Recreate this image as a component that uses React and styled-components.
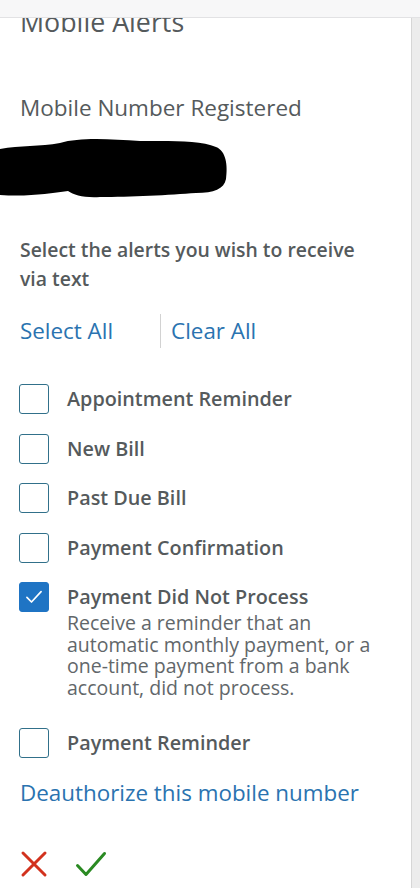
import React, { useState } from 'react';
import styled, { createGlobalStyle } from 'styled-components';

const GlobalStyle = createGlobalStyle`
  html, body {
    margin: 0;
    padding: 0;
    background: #fff;
    font-family: "Open Sans", "Noto Sans", sans-serif;
  }
`;

const ALERTS = [
  { id: 'appt', label: 'Appointment Reminder' },
  { id: 'bill', label: 'New Bill' },
  { id: 'pastdue', label: 'Past Due Bill' },
  { id: 'confirm', label: 'Payment Confirmation' },
  {
    id: 'failed',
    label: 'Payment Did Not Process',
    note: 'Receive a reminder that an automatic monthly payment, or a one-time payment from a bank account, did not process.',
  },
  { id: 'reminder', label: 'Payment Reminder' },
];

const Page = styled.div`
  width: 420px;
  height: 888px;
  display: flex;
  flex-direction: column;
  overflow: hidden;
`;

const TopBar = styled.div`
  height: 17px;
  flex: none;
  background: #f7f7f8;
  border-bottom: 1px solid #e2e2e4;
`;

const Body = styled.div`
  flex: 1;
  display: flex;
  min-height: 0;
`;

const Panel = styled.div`
  flex: 1;
  overflow: hidden;
  padding: 0 20px;
  color: #555a5c;
`;

const Rail = styled.div`
  width: 8px;
  flex: none;
  background: #ececec;
  border-left: 1px solid #d6d6d6;
`;

const Title = styled.h1`
  margin: -9px 0 0;
  font-size: 26.8px;
  line-height: 26px;
  font-weight: 400;
`;

const Label = styled.div`
  margin-top: 60px;
  font-size: 22.5px;
  line-height: 26px;
`;

const Redaction = styled.svg`
  display: block;
  margin: 14px 0 0 -20px;
`;

const Prompt = styled.p`
  margin: 36px 0 0;
  max-width: 345px;
  font-size: 19.4px;
  line-height: 29px;
  font-weight: 600;
`;

const LinkRow = styled.div`
  display: flex;
  align-items: center;
  margin-top: 21px;
`;

const TextLink = styled.a`
  color: #2a73b0;
  font-size: 22.4px;
  line-height: 28px;
  text-decoration: none;
  cursor: pointer;
`;

const Divider = styled.span`
  width: 1px;
  height: 34px;
  background: #d2d2d2;
  margin: 0 10px 0 47px;
`;

const List = styled.ul`
  list-style: none;
  margin: 36px 0 0;
  padding: 0;
  display: flex;
  flex-direction: column;
  gap: 19.5px;
`;

const Item = styled.li`
  display: flex;
  align-items: flex-start;
  gap: 18px;
  margin-bottom: ${p => (p.$spaced ? '10px' : '0')};
`;

const Box = styled.button`
  width: 30px;
  height: 30px;
  flex: none;
  padding: 0;
  margin-left: -1px;
  border-radius: 3px;
  border: 1.5px solid ${p => (p.$on ? '#1f74c4' : '#31708a')};
  background: ${p => (p.$on ? '#1f74c4' : '#fff')};
  display: flex;
  align-items: center;
  justify-content: center;
  cursor: pointer;
`;

const ItemText = styled.div`
  display: flex;
  flex-direction: column;
`;

const ItemLabel = styled.span`
  font-size: 19.8px;
  line-height: 30px;
  font-weight: 600;
`;

const ItemNote = styled.span`
  font-size: 19.5px;
  line-height: 21.5px;
  color: #62676a;
  max-width: 310px;
`;

const Deauth = styled(TextLink)`
  display: block;
  margin-top: 21px;
`;

const Actions = styled.div`
  display: flex;
  align-items: center;
  gap: 27px;
  margin-top: 43px;
`;

const IconButton = styled.button`
  border: none;
  background: none;
  padding: 0;
  cursor: pointer;
  display: flex;
`;

function Tick({ color, size, width }) {
  return (
    <svg width={size} height={size} viewBox="0 0 24 24" fill="none">
      <path d="M3.5 12.5l5.5 5.5L20.5 5.5" stroke={color} strokeWidth={width} strokeLinecap="round" strokeLinejoin="round" />
    </svg>
  );
}

export default function App() {
  const [checked, setChecked] = useState({ failed: true });

  const toggle = id => setChecked(prev => ({ ...prev, [id]: !prev[id] }));
  const selectAll = () => setChecked(Object.fromEntries(ALERTS.map(a => [a.id, true])));
  const clearAll = () => setChecked({});

  return (
    <Page>
      <GlobalStyle />
      <TopBar />
      <Body>
        <Panel>
          <Title>Mobile Alerts</Title>
          <Label>Mobile Number Registered</Label>
          {/* number is masked out */}
          <Redaction width="228" height="64" viewBox="0 0 228 64">
            <path
              d="M0 14 C20 10 40 12 60 8 C80 2 110 4 140 6 C170 6 200 5 216 12 C226 16 228 30 226 44 C224 54 214 58 196 58 C170 60 130 62 100 62 C84 63 74 60 68 56 C50 58 30 62 0 60 Z"
              fill="#000"
            />
          </Redaction>
          <Prompt>Select the alerts you wish to receive via text</Prompt>
          <LinkRow>
            <TextLink onClick={selectAll}>Select All</TextLink>
            <Divider />
            <TextLink onClick={clearAll}>Clear All</TextLink>
          </LinkRow>
          <List>
            {ALERTS.map(a => (
              <Item key={a.id} $spaced={!!a.note}>
                <Box $on={!!checked[a.id]} onClick={() => toggle(a.id)} aria-checked={!!checked[a.id]} role="checkbox">
                  {checked[a.id] && <Tick color="#fff" size={20} width={2} />}
                </Box>
                <ItemText>
                  <ItemLabel>{a.label}</ItemLabel>
                  {a.note && <ItemNote>{a.note}</ItemNote>}
                </ItemText>
              </Item>
            ))}
          </List>
          <Deauth>Deauthorize this mobile number</Deauth>
          <Actions>
            <IconButton aria-label="Cancel">
              <svg width="28" height="28" viewBox="0 0 28 28">
                <path d="M3 3L25 25M25 3L3 25" stroke="#d2321e" strokeWidth="3" strokeLinecap="round" />
              </svg>
            </IconButton>
            <IconButton aria-label="Save">
              <svg width="32" height="28" viewBox="0 0 32 28">
                <path d="M2.5 15.5L11 24.5L29.5 3.5" stroke="#2a8a22" strokeWidth="3" fill="none" strokeLinecap="round" strokeLinejoin="round" />
              </svg>
            </IconButton>
          </Actions>
        </Panel>
        <Rail />
      </Body>
    </Page>
  );
}
